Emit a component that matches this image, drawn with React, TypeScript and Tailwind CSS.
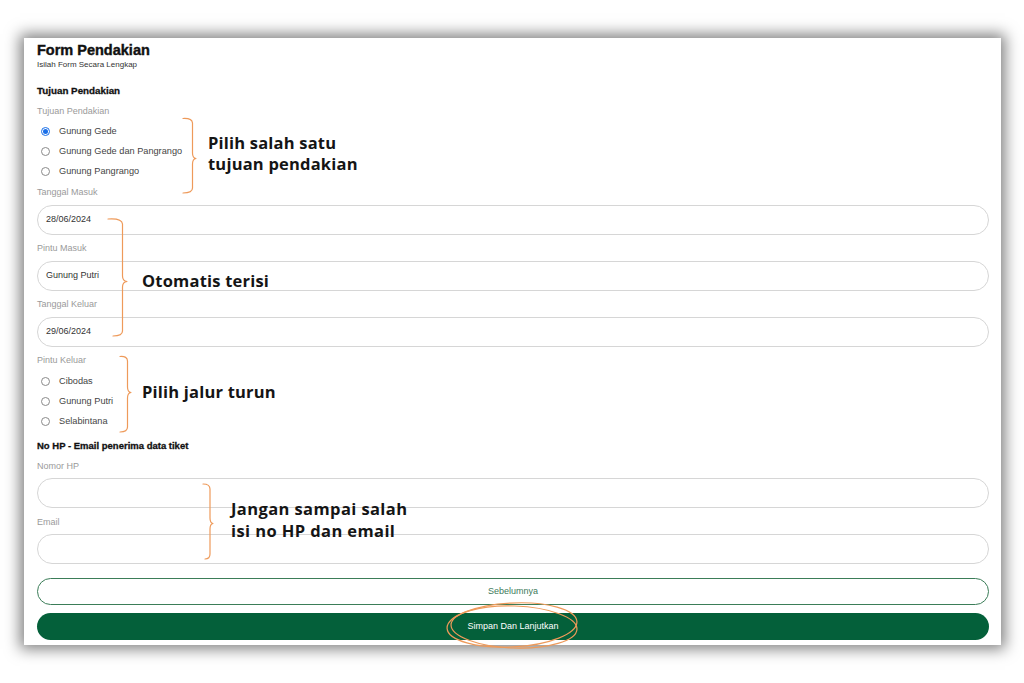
import React from "react";

const sans = { fontFamily: '"Liberation Sans", Arial, sans-serif' };
const anno = { fontFamily: '"Open Sans", "Noto Sans", sans-serif' };

function Radio({ label, checked }: { label: string; checked?: boolean }) {
  return (
    <div className="flex h-[20px] items-center pl-[4px]">
      {checked ? (
        <span className="flex h-[9px] w-[9px] items-center justify-center rounded-full border border-[#1a6fe8] bg-white">
          <span className="h-[5px] w-[5px] rounded-full bg-[#1a6fe8]" />
        </span>
      ) : (
        <span className="h-[9px] w-[9px] rounded-full border border-[#8a8a8a] bg-white" />
      )}
      <span className="ml-[9px] text-[9.2px] leading-[10px] text-[#444]">{label}</span>
    </div>
  );
}

function Label({ children, mt }: { children: React.ReactNode; mt: string }) {
  return <div className={`${mt} h-[10px] text-[9px] leading-[10px] text-[#9a9a9a]`}>{children}</div>;
}

function Field({ value, mt }: { value?: string; mt: string }) {
  return (
    <div className={`${mt} flex h-[30px] items-center rounded-full border border-[#d6d6d6] bg-white pl-[8px] text-[9px] text-[#333]`}>
      {value}
    </div>
  );
}

export default function App() {
  return (
    <div className="relative h-[683px] w-[1024px] overflow-hidden bg-white" style={sans}>
      <div className="ml-[24px] mt-[38px] h-[607px] w-[977px] bg-white px-[13px] pr-[12px] pt-[4px] shadow-[0_0_14px_4px_rgba(0,0,0,0.5)]">
        <div className="h-[16px] text-[14.5px] font-bold leading-[16px] text-[#111] [-webkit-text-stroke:0.4px_#111]">Form Pendakian</div>
        <div className="mt-[2px] h-[10px] text-[8px] leading-[10px] text-[#333]">Isilah Form Secara Lengkap</div>
        <div className="mt-[16px] h-[10px] text-[9.8px] font-bold leading-[10px] text-[#111] [-webkit-text-stroke:0.3px_#111]">Tujuan Pendakian</div>
        <Label mt="mt-[10px]">Tujuan Pendakian</Label>
        <div className="mt-[5px]">
          <Radio label="Gunung Gede" checked />
          <Radio label="Gunung Gede dan Pangrango" />
          <Radio label="Gunung Pangrango" />
        </div>
        <Label mt="mt-[6px]">Tanggal Masuk</Label>
        <Field mt="mt-[8px]" value="28/06/2024" />
        <Label mt="mt-[8px]">Pintu Masuk</Label>
        <Field mt="mt-[8px]" value="Gunung Putri" />
        <Label mt="mt-[8px]">Tanggal Keluar</Label>
        <Field mt="mt-[8px]" value="29/06/2024" />
        <Label mt="mt-[8px]">Pintu Keluar</Label>
        <div className="mt-[6px]">
          <Radio label="Cibodas" />
          <Radio label="Gunung Putri" />
          <Radio label="Selabintana" />
        </div>
        <div className="mt-[10px] h-[10px] text-[9.5px] font-bold leading-[10px] text-[#111] [-webkit-text-stroke:0.3px_#111]">No HP - Email penerima data tiket</div>
        <Label mt="mt-[10px]">Nomor HP</Label>
        <Field mt="mt-[7px]" />
        <Label mt="mt-[9px]">Email</Label>
        <Field mt="mt-[7px]" />
        <div className="mt-[14px] flex h-[27px] items-center justify-center rounded-full border-[1.5px] border-[#3b7d58] bg-white text-[9px] text-[#3d7a5a]">
          Sebelumnya
        </div>
        <div className="mt-[8px] flex h-[27px] items-center justify-center rounded-full bg-[#04603a] text-[9px] text-white">
          Simpan Dan Lanjutkan
        </div>
      </div>

      {/* annotations */}
      <svg className="pointer-events-none absolute left-0 top-0" width="1024" height="683" viewBox="0 0 1024 683" fill="none">
        <g stroke="#ee9a5a" strokeWidth="1.2" strokeLinecap="round" strokeLinejoin="round">
          <path d="M183 118.5 Q192 118 192.5 123 L192.5 153 Q192.5 158 196 158.5 Q192.5 159 192.5 164 L192.5 188 Q192.5 193 183 193" />
          <path d="M108 219 Q122 218 122.5 224 L122.5 276 Q122.5 281 127 281.5 Q122.5 282 122.5 287 L122.5 331 Q122.5 336 113 336" />
          <path d="M120 356.5 Q127.5 356 127.5 361 L127.5 387 Q127.5 392 131 392.5 Q127.5 393 127.5 398 L127.5 427 Q127.5 432 120 432" />
          <path d="M203 484 Q210 484 210 489 L210 518 Q210 523 213 523.5 Q210 524 210 529 L210 554 Q210 559 205 559" />
          <ellipse cx="512" cy="625" rx="65" ry="22" transform="rotate(-3 512 625)" />
          <ellipse cx="514" cy="627" rx="63" ry="21" transform="rotate(2 514 627)" />
        </g>
      </svg>
      <div className="absolute left-[208px] top-[132px] text-[16.5px] font-bold leading-[21px] tracking-[0.2px] text-[#151515]" style={anno}>
        Pilih salah satu
        <br />
        tujuan pendakian
      </div>
      <div className="absolute left-[142px] top-[270px] text-[16.5px] font-bold leading-[21px] tracking-[0.2px] text-[#151515]" style={anno}>
        Otomatis terisi
      </div>
      <div className="absolute left-[142px] top-[381px] text-[16.5px] font-bold leading-[21px] tracking-[0.2px] text-[#151515]" style={anno}>
        Pilih jalur turun
      </div>
      <div className="absolute left-[231px] top-[498px] text-[16.5px] font-bold leading-[22px] tracking-[0.4px] text-[#151515]" style={anno}>
        Jangan sampai salah
        <br />
        isi no HP dan email
      </div>
    </div>
  );
}
